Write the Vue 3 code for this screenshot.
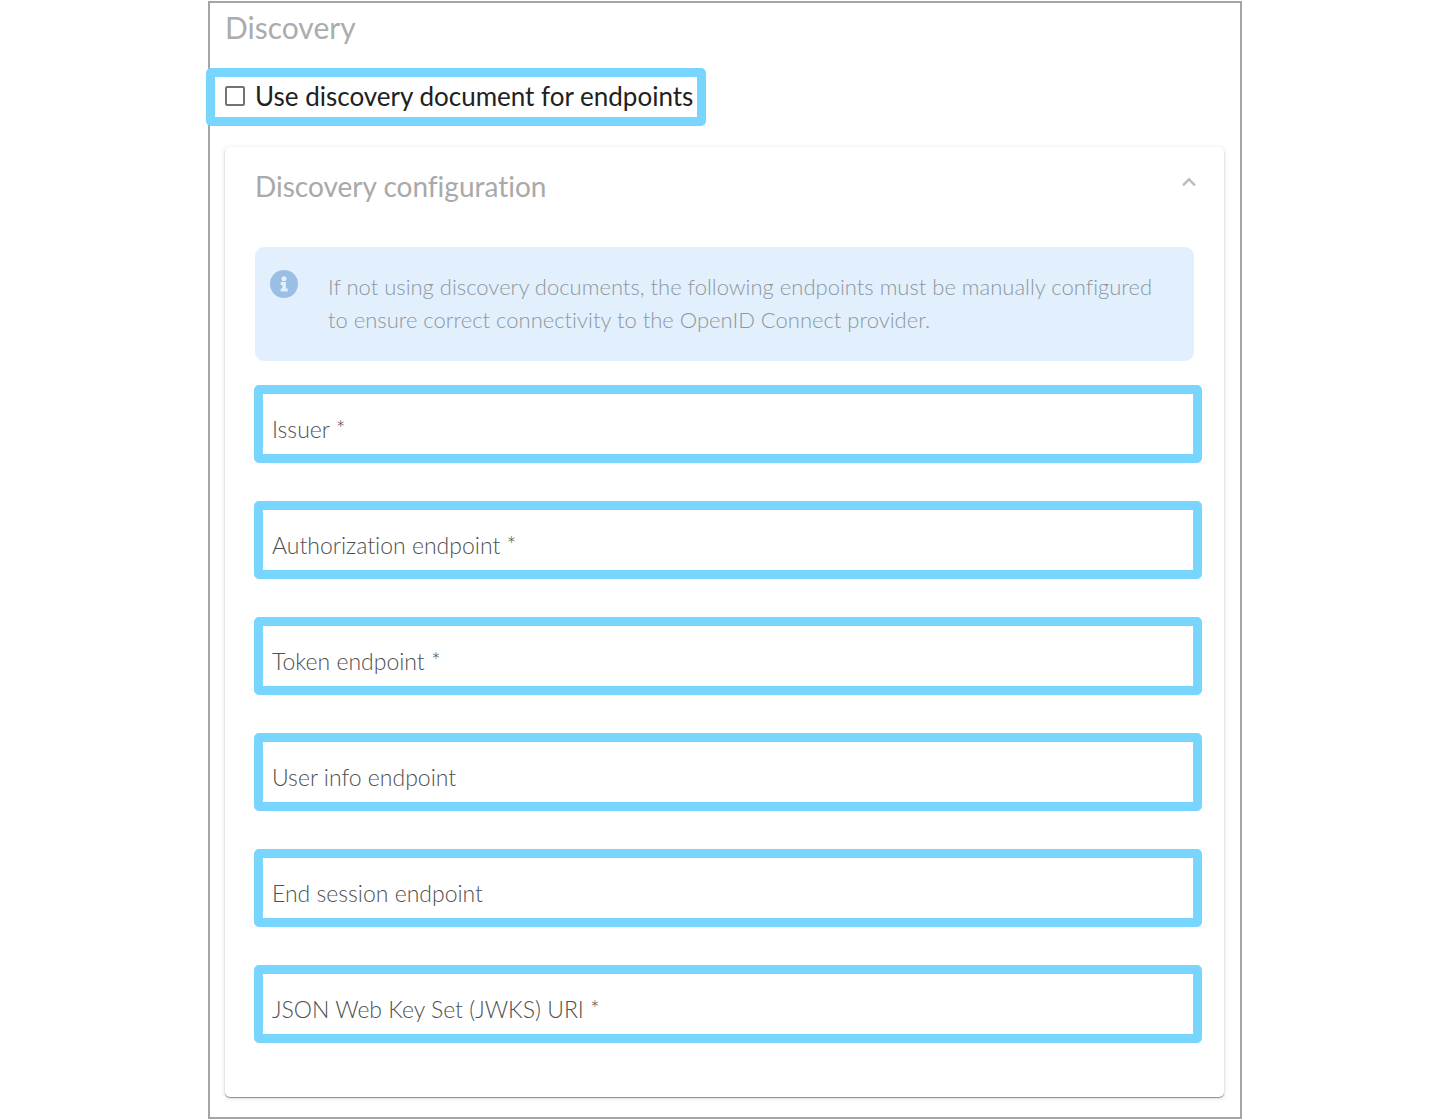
<script setup>
import { ref } from 'vue'

const useDiscovery = ref(false)
const open = ref(true)
const fields = ref([
  { id: 'issuer', label: 'Issuer *', value: '' },
  { id: 'authorization', label: 'Authorization endpoint *', value: '' },
  { id: 'token', label: 'Token endpoint *', value: '' },
  { id: 'user-info', label: 'User info endpoint', value: '' },
  { id: 'end-session', label: 'End session endpoint', value: '' },
  { id: 'jwks', label: 'JSON Web Key Set (JWKS) URI *', value: '' }
])
</script>

<template>
  <main class="page">
    <section class="frame">
      <h1 class="title">Discovery</h1>

      <label class="toggle" for="use-discovery">
        <input id="use-discovery" v-model="useDiscovery" type="checkbox" />
        <span>Use discovery document for endpoints</span>
      </label>

      <section class="card">
        <header class="card-head">
          <h2>Discovery configuration</h2>
          <button type="button" class="collapse" aria-label="Collapse" :aria-expanded="open" @click="open = !open">
            <svg width="16" height="10" viewBox="0 0 16 10" aria-hidden="true">
              <path d="M2 8.3 8 2.3l6 6" fill="none" stroke="#bdbdbd" stroke-width="2.4" />
            </svg>
          </button>
        </header>

        <div v-if="open">
          <div class="info">
            <svg class="info-icon" width="28" height="28" viewBox="0 0 28 28" aria-hidden="true">
              <circle cx="14" cy="14" r="14" fill="#9bbfe4" />
              <circle cx="14" cy="8.7" r="2.5" fill="#e2f0fe" />
              <path d="M10.7 12h5.2v6.6h1.8v3h-7v-3h1.6v-3.6h-1.6z" fill="#e2f0fe" />
            </svg>
            <p>
              If not using discovery documents, the following endpoints must be manually configured
              to ensure correct connectivity to the OpenID Connect provider.
            </p>
          </div>

          <form class="fields" @submit.prevent>
            <div v-for="f in fields" :key="f.id" class="field">
              <input :id="f.id" v-model="f.value" type="text" />
              <label v-show="!f.value" :for="f.id">{{ f.label }}</label>
            </div>
          </form>
        </div>
      </section>
    </section>
  </main>
</template>

<style>
body {
  background: #fff;
}
</style>

<style scoped>
.page {
  padding: 1px 199px 1px 208px;
  font-family: Lato, "Noto Sans", sans-serif;
  font-variant-ligatures: none;
}

.frame {
  border: 2px solid #a5a5a5;
  padding: 0 16px 20px 15px;
}

.title {
  margin: 0 0 17px;
  font-size: 30px;
  font-weight: 400;
  line-height: 48px;
  color: #acacac;
}

.toggle {
  display: flex;
  align-items: center;
  gap: 10px;
  box-sizing: border-box;
  width: 500px;
  height: 58px;
  margin: 0 0 21px -19px;
  padding: 0 0 3px 10px;
  border: 9px solid #78d5ff;
  border-radius: 5px;
  background: #fff;
  font-size: 26px;
  line-height: 32px;
  color: #212121;
  white-space: nowrap;
}

.toggle input {
  appearance: none;
  flex: none;
  width: 20px;
  height: 20px;
  margin: 0;
  border: 2px solid #737373;
  border-radius: 2px;
  background: #fff;
}

.toggle input:checked {
  background: #737373;
}

.card {
  padding: 19px 30px 54px;
  border-radius: 5px;
  background: #fff;
  box-shadow: 0 1px 1px rgba(0, 0, 0, 0.4), 0 1px 5px rgba(0, 0, 0, 0.14);
}

.card-head {
  display: flex;
  justify-content: space-between;
  margin-bottom: 41px;
}

.card-head h2 {
  margin: 0;
  font-size: 28px;
  font-weight: 400;
  line-height: 40px;
  color: #a9a9a9;
}

.collapse {
  display: flex;
  align-items: center;
  height: 32px;
  margin-right: -3px;
  padding: 0;
  border: 0;
  background: none;
}

.info {
  display: flex;
  gap: 30px;
  margin-bottom: 24px;
  padding: 23px 30px 25px 15px;
  border-radius: 9px;
  background: #e2f0fe;
}

.info-icon {
  flex: none;
}

.info p {
  margin: 0;
  font-size: 22px;
  font-weight: 300;
  line-height: 33px;
  color: #8f979d;
}

.fields {
  display: grid;
  gap: 38px;
  margin: 0 -8px 0 -1px;
}

.field {
  display: grid;
  height: 60px;
  border: 9px solid #78d5ff;
  border-radius: 5px;
  font-size: 23px;
  font-weight: 300;
  line-height: 28px;
  color: #4f4f4f;
}

.field input,
.field label {
  grid-area: 1 / 1;
  padding: 21px 9px 11px;
}

.field input {
  min-width: 0;
  border: 0;
  outline: 0;
  background: none;
  font: inherit;
  color: inherit;
}

.field label {
  justify-self: start;
}
</style>
